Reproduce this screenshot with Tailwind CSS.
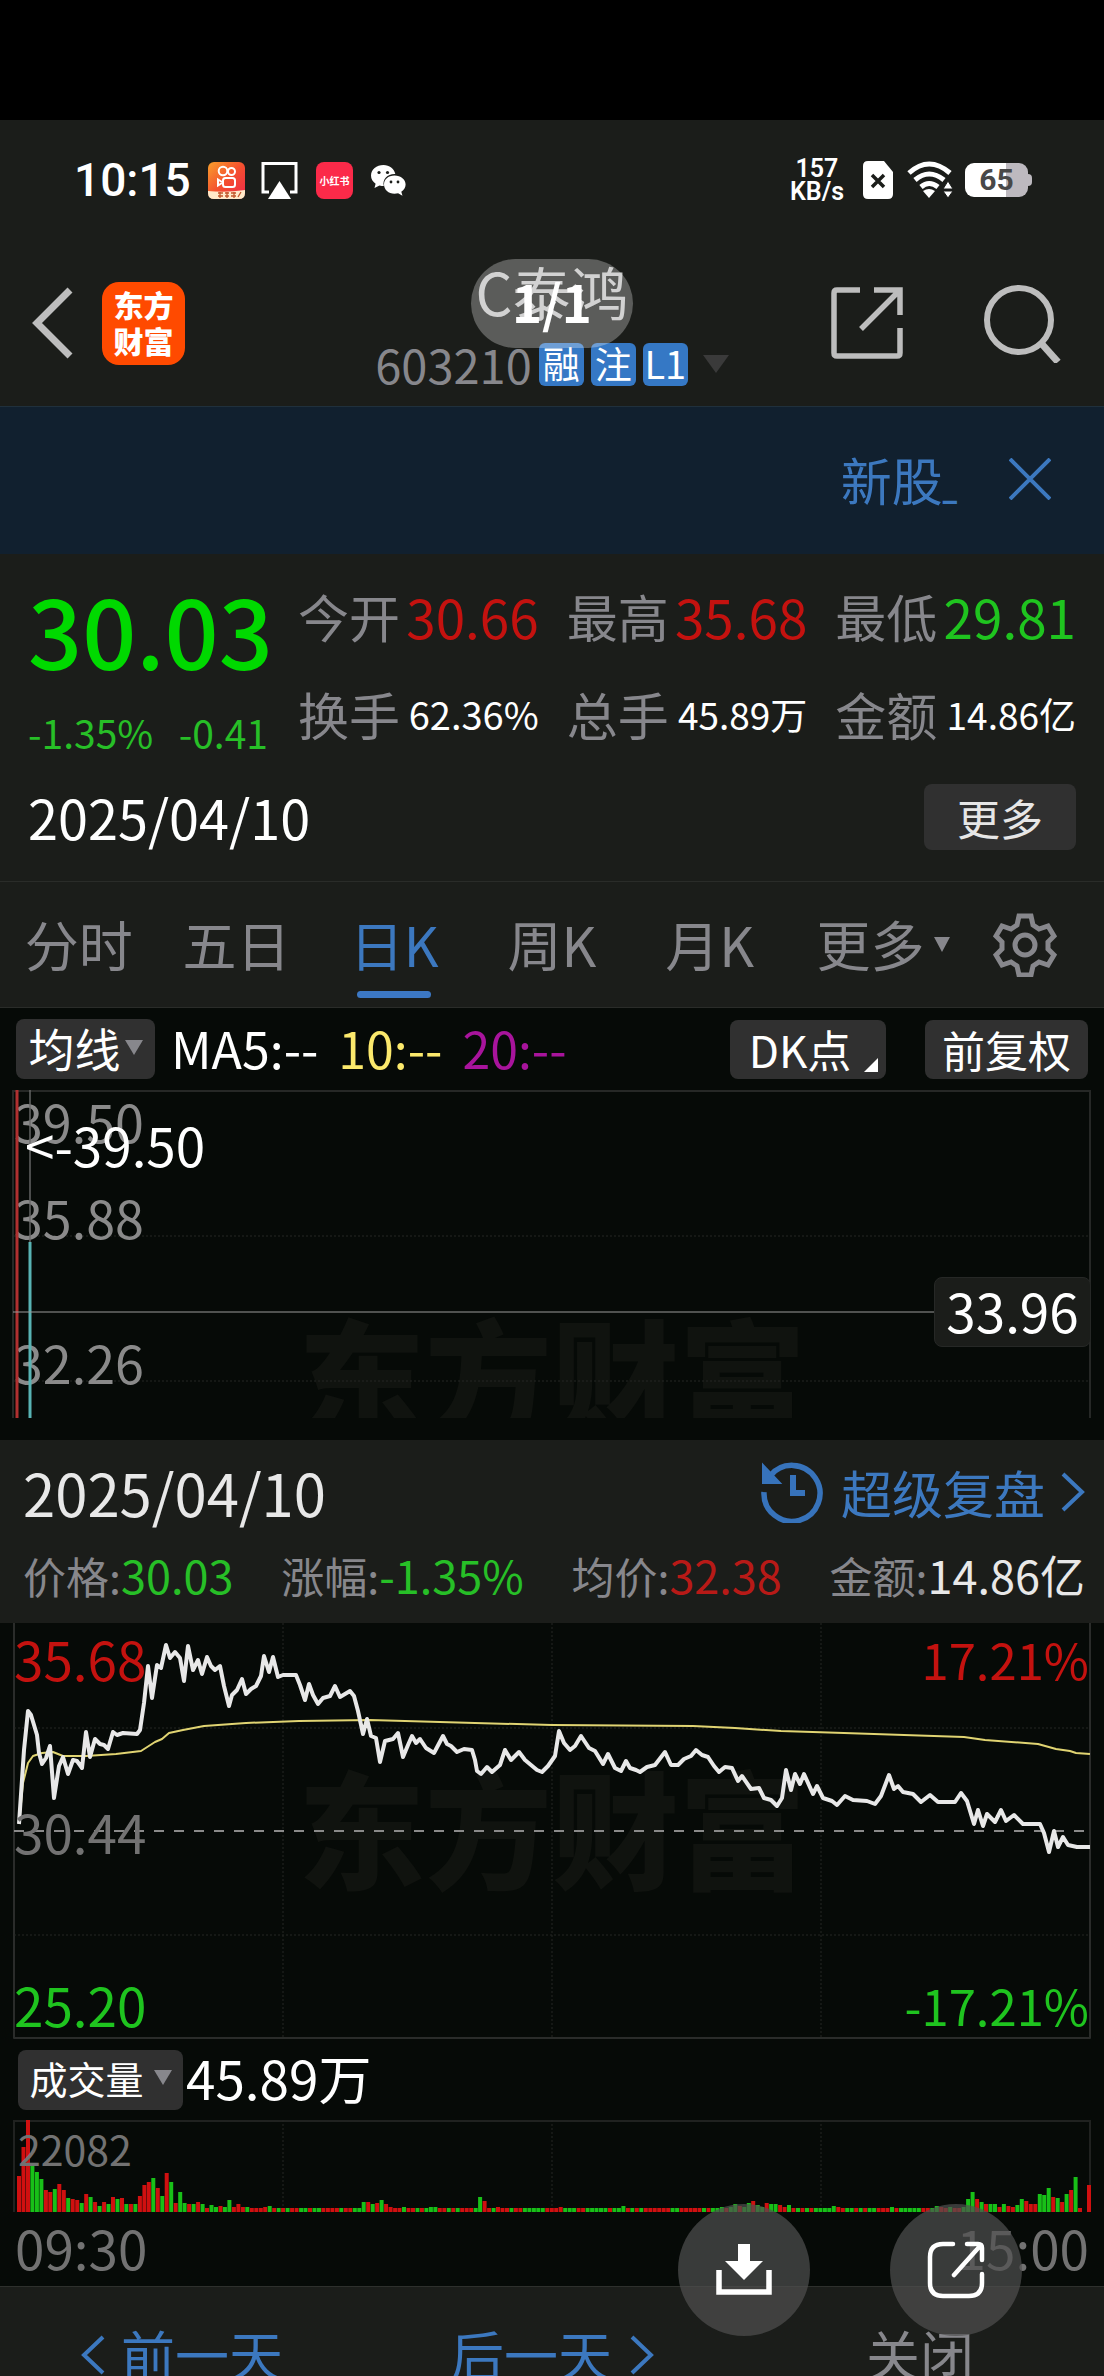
<!DOCTYPE html>
<html lang="zh-CN">
<head>
  <meta charset="UTF-8" />
  <meta name="viewport" content="width=device-width, initial-scale=1" />
  <title>C泰鸿 603210</title>
  <script src="https://cdn.jsdelivr.net/npm/@tailwindcss/browser@4"></script>
</head>
<body class="bg-[#060a07] text-white font-['Noto_Sans_CJK_SC',sans-serif]">
  <div class="relative flex flex-col h-screen overflow-hidden whitespace-nowrap">
    <div class="h-[120px] shrink-0 bg-black"></div>

    <!-- Status bar -->
    <div class="h-[120px] shrink-0 bg-[#1b1d1a] flex items-center justify-between pl-[74px] pr-[72px]">
      <div class="flex items-center">
        <span class="w-[134px] text-[46px] leading-[60px] font-medium font-['Roboto',sans-serif]">10:15</span>
        <svg class="w-[37px] h-[37px]" viewBox="0 0 37 37">
          <defs><linearGradient id="ks" x1="0" y1="0" x2="1" y2="1"><stop offset="0" stop-color="#f9a02c" /><stop offset=".5" stop-color="#f4502f" /><stop offset="1" stop-color="#f0284a" /></linearGradient></defs>
          <rect width="37" height="37" rx="6" fill="url(#ks)" />
          <g fill="none" stroke="#fff" stroke-width="2">
            <circle cx="15" cy="9" r="4.3" /><circle cx="23.500" cy="9.500" r="3.500" />
            <rect x="15" y="16" width="12" height="9" rx="2.500" /><path d="M14 20l-4-2.500v6l4-2.500" />
          </g>
          <path d="M0 29q18 2 37-1v3q0 6-6 6H6q-6 0-6-6z" fill="#ffe9c9" />
          <path d="M10 31h5M10 34h5M17 31h4M17 34h4M23 31h5M23 34h5M12 30v6M19 30v6M26 30v6M30 35l3-5" stroke="#c2572b" stroke-width="1.300" />
        </svg>
        <svg class="w-[37px] h-[37px] ml-4" viewBox="0 0 37 37"><path d="M8 30H2V1.500h33V30h-6" fill="none" stroke="#fff" stroke-width="3" /><path d="M18.500 19L30 37H7z" fill="#fff" /></svg>
        <div class="w-[37px] h-[37px] ml-[18px] rounded-lg bg-[#fb2a49] text-[10px] leading-[37px] font-bold text-center">小红书</div>
        <svg class="w-[35px] h-[32px] ml-[18px]" viewBox="0 0 35 32">
          <path d="M12.500 1C5.500 1 0 5.500 0 11.500c0 3.500 1.800 6.300 4.600 8.200L3.500 24l5-2.600c1.500.4 2.600.5 4.300.5C11 15 17 9.500 24.300 10 23 4.500 18.500 1 12.500 1z" fill="#fff" />
          <path d="M23.500 11.500C17 11.500 13 15.500 13 20.500s4.500 9.300 10.500 9.300c1.300 0 2.500-.2 3.600-.5l4.400 2.500-1.200-4c2.800-1.800 4.300-4.400 4.300-7.300 0-5-4.600-9-11.100-9z" fill="#fff" />
          <g fill="#1b1d1a"><circle cx="8" cy="8.500" r="1.600" /><circle cx="16.500" cy="8.500" r="1.600" /><circle cx="20" cy="18" r="1.400" /><circle cx="27" cy="18" r="1.400" /></g>
        </svg>
      </div>
      <div class="flex items-center">
        <div class="mr-[19px] text-center font-semibold font-['Roboto',sans-serif] text-[25px] leading-[23px]"><div>157</div><div>KB/s</div></div>
        <svg class="w-[30px] h-[38px]" viewBox="0 0 30 38"><path d="M5 0h16l9 11v22q0 5-5 5H5q-5 0-5-5V5q0-5 5-5z" fill="#fff" /><path d="M9 14l12 12M21 14L9 26" stroke="#1b1d1a" stroke-width="3.500" /></svg>
        <svg class="w-[46px] h-[38px] ml-[14px]" viewBox="0 0 46 38">
          <g fill="none" stroke="#fff" stroke-width="5"><path d="M2 12Q22 -6 43 12" /><path d="M8 19Q22 7 37 19" /><path d="M14 26Q22 19 31 26" /></g>
          <path d="M16 30q6-4 12 0l-6 7z" fill="#fff" />
          <path d="M36 28l5-8 5 8zM36 30h10l-5 7z" fill="#fff" stroke="#1b1d1a" stroke-width="1" />
        </svg>
        <div class="ml-3 flex items-center">
          <div class="w-[63px] h-[34px] rounded-[9px] bg-linear-to-r from-white from-65% to-[#bdb9bf] to-65% text-[#484848] text-[30px] leading-[34px] font-bold text-center font-['Roboto',sans-serif]">65</div>
          <div class="w-1 h-3 rounded-r bg-[#bdb9bf]"></div>
        </div>
      </div>
    </div>

    <!-- Title bar -->
    <header class="relative h-[166px] shrink-0 bg-[#1b1d1a] flex justify-between pl-8 pr-[43px]">
      <div class="flex items-center gap-[29px]">
        <button aria-label="返回"><svg class="w-[41px] h-[72px]" viewBox="0 0 41 72"><path d="M38 3L5 36l33 33" fill="none" stroke="#bdbdbd" stroke-width="7" /></svg></button>
        <div class="w-[83px] h-[83px] rounded-[17px] bg-[#ff4a00] text-[30px] leading-[36px] pt-[4px] font-black text-center"><div>东方</div><div>财富</div></div>
      </div>
      <div class="absolute inset-x-0 top-[17px] flex flex-col items-center">
        <h1 class="text-[58px] leading-[68px] text-[#c0c0c0]">C泰鸿</h1>
        <div class="flex items-center gap-[7px] pt-[11px]">
          <span class="text-[47px] leading-[56px] text-[#87878c]">603210</span>
          <span class="w-[45px] h-[43px] rounded-md bg-[#3578c5] text-[37px] leading-[40px] text-center">融</span>
          <span class="w-[45px] h-[43px] rounded-md bg-[#3578c5] text-[37px] leading-[40px] text-center">注</span>
          <span class="w-[45px] h-[43px] rounded-md bg-[#3578c5] text-[38px] leading-[40px] text-center">L1</span>
          <svg class="w-[26px] h-[18px] ml-2" viewBox="0 0 26 18"><path d="M0 0h26L13 18z" fill="#3a3a3a" /></svg>
        </div>
      </div>
      <div class="absolute left-1/2 top-[19px] -translate-x-1/2 w-[162px] h-[89px] rounded-full bg-white/28 text-[51px] leading-[84px] font-bold text-center">1/1</div>
      <div class="flex items-center gap-[80px]">
        <button aria-label="分享"><svg class="w-[72px] h-[72px]" viewBox="0 0 72 72" fill="none" stroke="#bdbdbd" stroke-width="5.500"><path d="M29 3H6q-3 0-3 3v60q0 3 3 3h60q3 0 3-3V41M43 3h26v25M68 4L30 42" /></svg></button>
        <button aria-label="搜索"><svg class="w-[78px] h-[80px]" viewBox="0 0 78 80" fill="none" stroke="#bdbdbd" stroke-width="6"><circle cx="36" cy="37" r="32" /><path d="M58 60l17 19" stroke-width="7" /></svg></button>
      </div>
    </header>

    <!-- Notice -->
    <div class="h-[148px] shrink-0 bg-[#11202f] border-t border-[#20303c] flex items-center justify-end pr-[53px] pb-1 gap-[52px] text-[#3c78bf]">
      <a href="#" class="pt-3 text-[51px] leading-[60px]">新股<span class="font-bold text-[32px] font-['Roboto',sans-serif]">_</span></a>
      <button aria-label="关闭通知"><svg class="w-[42px] h-[42px]" viewBox="0 0 42 42"><path d="M1 1l40 40M41 1L1 41" stroke="#3c78bf" stroke-width="4" /></svg></button>
    </div>

    <!-- Quote -->
    <section class="h-[327px] shrink-0 bg-[#1b1d1a] px-[28px] pt-[28px]">
      <div class="flex justify-between">
        <div class="w-[240px]">
          <div class="text-[95px] leading-[94px] font-medium text-[#00d900]">30.03</div>
          <div class="flex justify-between pt-[32px] text-[39px] leading-[48px] text-[#27bf27]"><span>-1.35%</span><span>-0.41</span></div>
        </div>
        <dl class="grid grid-cols-3 content-start gap-x-[28px] gap-y-[34px] pt-[2px] text-[51px] leading-[64px] text-[#87878c] w-[778px]">
          <div class="flex justify-between items-center"><dt>今开</dt><dd class="text-[53px] text-[#c4120f]">30.66</dd></div>
          <div class="flex justify-between items-center"><dt>最高</dt><dd class="text-[53px] text-[#c4120f]">35.68</dd></div>
          <div class="flex justify-between items-center"><dt>最低</dt><dd class="text-[53px] text-[#1fc41f]">29.81</dd></div>
          <div class="flex justify-between items-center"><dt>换手</dt><dd class="text-[38px] text-white">62.36%</dd></div>
          <div class="flex justify-between items-center"><dt>总手</dt><dd class="text-[37px] text-white">45.89万</dd></div>
          <div class="flex justify-between items-center"><dt>金额</dt><dd class="text-[37px] text-white">14.86亿</dd></div>
        </dl>
      </div>
      <div class="flex justify-between items-center pt-[28px]">
        <span class="text-[54px] leading-[64px]">2025/04/10</span>
        <button class="w-[152px] h-[66px] rounded-lg bg-[#303030] text-[#e6e6e6] text-[43px] leading-[60px]">更多</button>
      </div>
    </section>

    <!-- Period tabs -->
    <nav class="h-[127px] shrink-0 bg-[#1b1d1a] border-y border-[#2a2c29] grid grid-cols-7 justify-items-center items-start pt-[26px] text-[54px] leading-[72px] text-[#87878c]">
      <a href="#">分时</a>
      <a href="#">五日</a>
      <a href="#" class="flex flex-col items-center text-[#3c78bf]">日K<span class="w-[74px] h-[7px] mt-[11px] rounded-full bg-[#3c78c4]"></span></a>
      <a href="#">周K</a>
      <a href="#">月K</a>
      <a href="#" class="flex items-start pl-8">更多<svg class="w-4 h-[15px] ml-[10px] mt-[29px]" viewBox="0 0 16 15"><path d="M0 0h16L8 15z" fill="#87878c" /></svg></a>
      <button aria-label="设置" class="h-[74px] flex items-center"><svg class="w-[64px] h-[64px]" viewBox="0 0 64 64" fill="none" stroke="#87878c" stroke-width="5"><path d="M26 3h12l2 9 6 4 9-3 6 10-6 6v7l6 6-6 10-9-3-6 4-2 9H26l-2-9-6-4-9 3L3 42l6-6v-7l-6-6L9 13l9 3 6-4z" /><circle cx="32" cy="32" r="10" /></svg></button>
    </nav>

    <!-- Moving averages -->
    <div class="h-[82px] shrink-0 flex items-center justify-between px-[16px]">
      <div class="flex items-center text-[50px] leading-[56px]">
        <button class="w-[139px] h-[60px] rounded-lg bg-[#303030] flex items-center justify-center gap-1 text-[46px] leading-[56px] pb-1">均线<svg class="w-[18px] h-[15px]" viewBox="0 0 18 15"><path d="M0 0h18L9 15z" fill="#87878c" /></svg></button>
        <span class="ml-[16px] pb-1">MA5:--</span>
        <span class="ml-[20px] pb-1 text-[#fbe96c]">10:--</span>
        <span class="ml-[20px] pb-1 text-[#a8149c]">20:--</span>
      </div>
      <div class="flex gap-[39px]">
        <button class="relative w-[156px] h-[59px] rounded-lg bg-[#303030] text-[44px] leading-[54px] pr-4">DK点<svg class="absolute right-2 bottom-[7px] w-[14px] h-[14px]" viewBox="0 0 14 14"><path d="M14 0v14H0z" fill="#fff" /></svg></button>
        <button class="w-[163px] h-[59px] rounded-lg bg-[#303030] text-[43px] leading-[54px]">前复权</button>
      </div>
    </div>

    <!-- Daily K line -->
    <div class="relative h-[328px] shrink-0 overflow-hidden text-[52px] leading-[60px] text-[#8a8a8a]">
      <div class="absolute inset-x-0 top-[198px] text-center text-[127px] leading-[170px] font-black text-[#10130f]">东方财富</div>
      <svg class="absolute inset-0 w-full h-full" viewBox="0 0 1104 328" preserveAspectRatio="none" fill="none">
        <path d="M13 328V1h1077v327" stroke="#262826" stroke-width="2" />
        <path d="M14 146h1076M14 291h1076" stroke="#242624" stroke-dasharray="2 2" />
      </svg>
      <div class="absolute left-[14px] top-px">39.50</div>
      <div class="absolute left-[14px] top-[97px]">35.88</div>
      <div class="absolute left-[14px] top-[242px]">32.26</div>
      <svg class="absolute inset-0 w-full h-full" viewBox="0 0 1104 328" preserveAspectRatio="none" fill="none">
        <path d="M30 0v152" stroke="#6a6a6a" stroke-opacity=".7" stroke-width="2" />
        <path d="M30 152v176" stroke="#58b4b4" stroke-width="3" />
        <path d="M17 0v328" stroke="#b03030" stroke-width="3" />
        <path d="M13 222h924" stroke="#9a9a9a" stroke-width="1" />
      </svg>
      <div class="absolute left-[25px] top-[24px] text-[53px] text-white">&lt;-39.50</div>
      <div class="absolute right-[13px] top-[187px] w-[157px] h-[70px] rounded-lg bg-[#1b1d1a] border border-[#262826] text-[53px] leading-[64px] text-white text-center">33.96</div>
    </div>

    <!-- Selected day -->
    <section class="mt-[22px] h-[183px] shrink-0 bg-[#1b1d1a] pl-[23px] pr-[19px] pt-[16px]">
      <div class="flex justify-between items-center">
        <span class="text-[58px] leading-[72px] text-[#e8e8e8]">2025/04/10</span>
        <a href="#" class="flex items-center text-[51px] leading-[68px] text-[#3c78bf]">
          <svg class="w-[62px] h-[62px] mr-[18px]" viewBox="0 0 62 62" fill="none" stroke="#3773bb"><path d="M3 31A28 28 0 1 0 9 15" stroke-width="5.500" /><path d="M2 4v18h17z" fill="#3773bb" stroke-width="2" /><path d="M32 14v18h12" stroke-width="6" /></svg>超级复盘<svg class="w-[24px] h-[40px] ml-[16px]" viewBox="0 0 24 40"><path d="M2 2l19 18L2 38" fill="none" stroke="#3c78bf" stroke-width="4" /></svg>
        </a>
      </div>
      <div class="flex justify-between items-center pt-[17px] text-[43px] leading-[60px] text-[#87878c]">
        <span>价格:<b class="font-normal text-[45px] text-[#27bf27]">30.03</b></span>
        <span>涨幅:<b class="font-normal text-[45px] text-[#27bf27]">-1.35%</b></span>
        <span>均价:<b class="font-normal text-[45px] text-[#b81a17]">32.38</b></span>
        <span>金额:<b class="font-normal text-[45px] text-[#e8e8e8]">14.86亿</b></span>
      </div>
    </section>

    <!-- Intraday price -->
    <div class="relative h-[416px] shrink-0 overflow-hidden text-[53px] leading-[60px]">
      <div class="absolute inset-x-0 top-[117px] text-center text-[127px] leading-[170px] font-black text-[#10130f]">东方财富</div>
      <svg class="absolute inset-0 w-full h-full" viewBox="0 0 1104 416" preserveAspectRatio="none" fill="none" stroke-linejoin="round">
        <path d="M14 0v415h1076V0" stroke="#2a2c2a" stroke-width="2" />
        <path d="M283 0v415M552 0v415M821 0v415M14 105h1076M14 312h1076" stroke="#242624" stroke-dasharray="2 2" />
        <path d="M14 208h1076" stroke="#8a8a8a" stroke-width="2" stroke-dasharray="10 10" />
        <polyline stroke="#e0d472" stroke-width="2" points="19,201 23,160 28,140 33,133 42,130 53,129 63,133 86,133 116,131 141,128 155,119 162,116 169,110 183,107 204,103 246,100 299,98 370,97 475,100 552,102 693,103 735,105 781,108 844,110 964,114 985,117 1038,121 1056,126 1070,128 1076,130 1090,131" />
        <polyline stroke="#e8e8e8" stroke-width="4" points="19,201 24,127 28,88 31,92 37,112 39,130 42,141 46,135 50,123 54,175 59,143 63,134 68,151 73,137 77,138 82,145 86,109 90,134 95,116 100,121 104,122 108,126 113,109 117,112 123,110 137,111 140,107 144,80 148,43 152,75 157,42 161,45 166,22 170,35 175,29 180,35 184,58 188,23 193,47 198,37 202,51 207,34 211,43 215,47 220,43 224,63 229,83 232,72 237,67 242,56 246,71 251,66 256,63 261,53 264,33 269,49 273,34 278,54 283,52 296,52 300,62 305,77 309,61 313,72 318,81 323,75 330,73 335,63 340,74 350,68 354,73 358,88 363,111 367,96 371,113 376,115 380,139 385,118 393,116 398,110 403,134 408,122 412,113 416,120 420,116 426,125 434,130 443,113 447,121 451,123 457,129 464,126 472,127 475,137 477,148 481,151 487,144 492,149 500,142 505,127 511,137 519,129 525,137 531,142 537,147 542,149 548,143 555,133 559,108 564,120 570,127 575,123 581,113 589,125 595,128 603,141 608,131 615,145 621,148 626,138 630,145 636,147 640,149 647,144 655,142 665,129 671,142 678,142 684,136 691,133 696,127 702,132 708,134 714,143 719,149 725,144 732,145 738,158 742,153 751,166 759,165 764,175 771,177 777,183 782,175 786,147 791,167 795,151 800,161 804,151 813,171 817,163 823,175 832,178 837,182 845,173 853,177 867,178 875,181 881,173 889,152 894,166 898,163 903,169 913,171 921,179 930,172 938,179 955,179 961,170 967,178 974,201 978,187 983,203 987,191 995,199 1001,187 1006,198 1014,192 1023,201 1040,201 1044,210 1049,229 1054,208 1058,224 1063,214 1068,222 1077,224 1090,224" />
      </svg>
      <div class="absolute left-[14px] top-[5px] text-[#c4120f]">35.68</div>
      <div class="absolute right-[15px] top-[6px] text-[49px] text-[#c4120f]">17.21%</div>
      <div class="absolute left-[14px] top-[178px] text-[#727272]">30.44</div>
      <div class="absolute left-[14px] top-[351px] text-[#1fc41f]">25.20</div>
      <div class="absolute right-[15px] top-[352px] text-[49px] text-[#1fc41f]">-17.21%</div>
    </div>

    <!-- Volume -->
    <div class="h-[81px] shrink-0 flex items-center pl-[18px]">
      <button class="w-[165px] h-[60px] rounded-lg bg-[#303030] flex items-center justify-center gap-[10px] text-[38px] leading-[56px] pb-1">成交量<svg class="w-[18px] h-[15px]" viewBox="0 0 18 15"><path d="M0 0h18L9 15z" fill="#87878c" /></svg></button>
      <span class="ml-[3px] text-[53px] leading-[60px] pb-[6px]">45.89万</span>
    </div>
    <div class="relative h-[92px] shrink-0">
      <svg class="absolute inset-0 w-full h-full" viewBox="0 0 1104 92" preserveAspectRatio="none" fill="none">
        <path d="M14 92V1h1076v91" stroke="#202220" stroke-width="2" />
        <path d="M283 0v92M552 0v92M821 0v92" stroke="#242624" stroke-dasharray="2 2" />
        <g id="volume-bars"></g>
      </svg>
      <div class="absolute left-[18px] top-0 text-[41px] leading-[56px] text-[#727272]">22082</div>
    </div>
    <div class="h-[74px] shrink-0 flex justify-between px-[15px] pt-[4px] text-[53px] leading-[62px] text-[#727272]"><span>09:30</span><span>15:00</span></div>

    <!-- Day switch -->
    <footer class="h-[130px] shrink-0 bg-[#1b1d1a] border-t border-[#2e302d] flex pt-[31px] text-[54px] leading-[72px] text-[#3c78bf]">
      <button class="flex items-start w-1/3 pl-[81px]"><svg class="w-[24px] h-[40px] mt-[17px] mr-[16px]" viewBox="0 0 24 40"><path d="M22 2L3 20l19 18" fill="none" stroke="#3c78bf" stroke-width="4" /></svg>前一天</button>
      <button class="flex items-start w-1/3 pl-[82px]">后一天<svg class="w-[24px] h-[40px] mt-[17px] ml-[18px]" viewBox="0 0 24 40"><path d="M2 2l19 18L2 38" fill="none" stroke="#3c78bf" stroke-width="4" /></svg></button>
      <button class="flex items-start w-1/3 pl-[130px] text-[#87878c]">关闭</button>
    </footer>

    <div class="absolute right-[82px] bottom-[40px] flex gap-[80px]">
      <button aria-label="下载" class="w-[132px] h-[132px] rounded-full bg-[#505050]/70 flex items-center justify-center"><svg class="w-[56px] h-[52px]" viewBox="0 0 56 52"><path d="M22 0h12v17h13L28 36 9 17h13z" fill="#fff" /><path d="M3 26v22h50V26" fill="none" stroke="#fff" stroke-width="5.500" /></svg></button>
      <button aria-label="打开" class="w-[132px] h-[132px] rounded-full bg-[#505050]/70 flex items-center justify-center"><svg class="w-[58px] h-[58px]" viewBox="0 0 58 58" fill="none" stroke="#fff" stroke-width="4.500" stroke-linecap="round"><path d="M26 3H16Q3 3 3 16v26q0 13 13 13h26q13 0 13-13V33M40 3h11q4 0 4 4v12M53 5L27 34" /></svg></button>
    </div>
  </div>

<script>
  // direction (r/g) followed by bar height, one entry per time slot
  const volume = 'r36 r65 r92 g48 g40 g33 r22 r20 g23 r28 r22 g14 r13 r12 g9 r18 g15 r10 g6 r10 g8 r15 g13 r14 g8 r8 g8 r16 r27 r30 g34 r24 g16 r39 g30 r9 g20 g9 r8 g8 r10 g8 r4 g7 g5 r6 g5 g12 r5 r8 r5 g5 r4 r4 r4 r5 g6 r4 g4 r4 ' +
    'g4 r4 r4 g4 g4 r4 g4 g4 r4 r4 r4 r4 g4 r4 r4 g4 g4 g10 r10 g8 r9 g12 r8 r5 r4 r4 g5 r4 r4 g4 r4 g4 g5 g5 r4 r4 g4 r4 g4 r4 r4 r4 g4 g15 r11 r4 g4 r5 r4 r4 g4 r4 r4 g4 g4 g4 g4 g4 r4 r4 ' +
    'r4 r5 g4 g4 g4 r4 r4 g4 g4 g4 g4 g4 r4 g4 g4 g6 r4 g4 r4 g4 r4 r4 r4 r4 r4 r4 g4 g4 r4 r4 r4 r4 r4 g4 r4 g4 g4 g5 r4 g5 g8 r6 g5 g9 r11 g7 g5 r9 g8 g8 r7 r5 g7 r4 g4 r4 g4 r4 g4 g4 ' +
    'g4 g4 g6 r5 r4 g4 g4 r4 g4 r4 g4 g4 r4 r4 r4 g5 r4 g4 g4 g4 g4 g4 r4 r4 g4 g6 r5 r4 g5 r4 r4 g5 g13 g20 r13 g10 r8 g8 g8 r5 g8 r6 r5 g7 g13 r11 r8 r8 g18 g17 g24 r15 g14 r10 g18 r22 g35 r4 r0 r27';

  document.getElementById('volume-bars').innerHTML = volume.split(' ').map((bar, i) => {
    const height = Number(bar.slice(1));
    const color = bar[0] === 'r' ? '#d01010' : '#18c018';
    return `<rect x="${(17 + i * 4.477).toFixed(1)}" y="${92 - height}" width="4" height="${height}" fill="${color}" />`;
  }).join('');
</script>
</body>
</html>
